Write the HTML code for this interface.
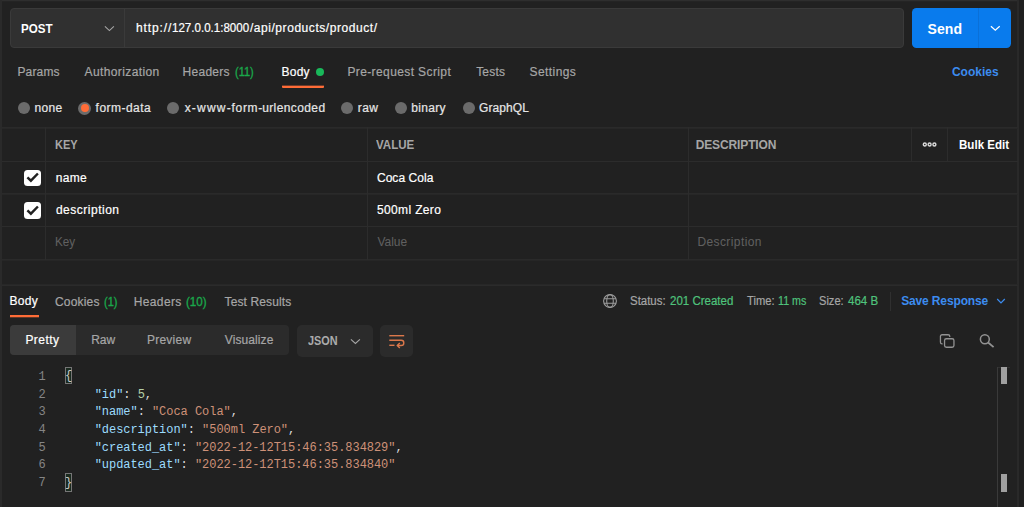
<!DOCTYPE html>
<html><head><meta charset="utf-8"><title>Postman</title>
<style>
html,body{margin:0;padding:0}
body{width:1024px;height:507px;background:#212121;position:relative;overflow:hidden;font-family:"Liberation Sans",sans-serif}
.a{position:absolute}
.t{position:absolute;transform-origin:0 0;-webkit-text-stroke:0.2px;line-height:16px;white-space:pre;font-family:"Liberation Sans",sans-serif}
.g{display:inline-block;transform-origin:0 0;white-space:pre}
.hl{position:absolute;height:1px;background:#2c2c2c;left:2px;width:1016px}
.vl{position:absolute;width:1px;background:#2c2c2c}
.radio{position:absolute;width:12.4px;height:12.4px;border-radius:50%;background:#6b6b6b;top:101.5px}
.cb{position:absolute;width:17px;height:16.5px;border-radius:3.5px;background:#fff;left:24.2px}
.code{position:absolute;left:66px;font:12px/17.67px "Liberation Mono",monospace;white-space:pre;color:#dcdcdc;letter-spacing:-0.04px}
.ln{position:absolute;left:20.6px;width:25px;text-align:right;font:12px/17.67px "Liberation Mono",monospace;color:#858585}
.b{position:relative;left:-1px;top:-1px;color:#c8c8c8}.k{color:#9cdcfe}.s{color:#ce9178}.n{color:#b5cea8}
</style></head><body>
<!-- edge strips -->
<div class="a" style="left:0;top:0;width:1019px;height:1px;background:#2e2e2e"></div>
<div class="a" style="left:0;top:1px;width:1019px;height:1px;background:#242424"></div>
<div class="a" style="left:0;top:0;width:2px;height:507px;background:#2a2a2a"></div>
<div class="a" style="left:1017px;top:0;width:2px;height:507px;background:#292929"></div>
<div class="a" style="left:1019px;top:0;width:5px;height:507px;background:#1f1f1f"></div>

<!-- url bar -->
<div class="a" style="left:10px;top:8px;width:894px;height:40px;box-sizing:border-box;background:#303030;border:1px solid #3a3a3a;border-radius:4px"></div>
<div class="vl" style="left:124px;top:9px;height:38px;background:#3a3a3a"></div>
<svg class="a" style="left:104px;top:24px" width="11" height="9" viewBox="0 0 11 9"><path d="M0.9 2.4 L5.4 6.6 L9.9 2.4" fill="none" stroke="#a6a6a6" stroke-width="1.1"/></svg>

<!-- send -->
<div class="a" style="left:912px;top:8px;width:99px;height:40px;background:#097bed;border-radius:4.5px"></div>
<div class="vl" style="left:978px;top:8px;height:40px;background:#0a70d8"></div>
<svg class="a" style="left:990px;top:24.3px" width="11" height="9" viewBox="0 0 11 9"><path d="M0.9 2.2 L5.3 6.3 L9.7 2.2" fill="none" stroke="#fff" stroke-width="1.2"/></svg>

<!-- request tabs -->
<div class="a" style="left:315.6px;top:68px;width:8.2px;height:8.2px;border-radius:50%;background:#19b85a"></div>
<div class="a" style="left:282px;top:85px;width:42px;height:1px;background:#6f3b29"></div>
<div class="a" style="left:282px;top:86px;width:42px;height:2px;background:#ff6c37;border-radius:0 0 1px 1px"></div>

<!-- radios -->
<div class="radio" style="left:18px"></div>
<div class="radio" style="left:78.4px;top:101.5px;width:13px;height:13px"></div>
<div class="a" style="left:80.6px;top:103.7px;width:8.6px;height:8.6px;border-radius:50%;background:#ff6c37"></div>
<div class="radio" style="left:167px"></div>
<div class="radio" style="left:341.1px"></div>
<div class="radio" style="left:394.9px"></div>
<div class="radio" style="left:462.8px"></div>

<!-- table -->
<div class="hl" style="top:127px;background:#2a2a2a"></div><div class="hl" style="top:128px;background:#272727"></div>
<div class="hl" style="top:161px"></div>
<div class="hl" style="top:193px;background:#2a2a2a"></div><div class="hl" style="top:194px;background:#272727"></div>
<div class="hl" style="top:226px"></div>
<div class="hl" style="top:259px;background:#2a2a2a"></div><div class="hl" style="top:260px;background:#262626"></div>
<div class="vl" style="left:45px;top:127px;height:133px"></div>
<div class="vl" style="left:367px;top:127px;height:133px"></div>
<div class="vl" style="left:688px;top:127px;height:133px"></div>
<div class="vl" style="left:911px;top:127px;height:35px"></div>
<div class="vl" style="left:947px;top:127px;height:35px"></div>
<!-- ooo -->
<svg class="a" style="left:922px;top:141px" width="16" height="7" viewBox="0 0 16 7"><g fill="none" stroke="#dadada" stroke-width="1.4"><circle cx="2.8" cy="3.5" r="1.5"/><circle cx="7.6" cy="3.5" r="1.5"/><circle cx="12.4" cy="3.5" r="1.5"/></g></svg>
<!-- checkboxes -->
<div class="cb" style="top:169.6px"></div>
<svg class="a" style="left:24.2px;top:169.2px" width="17" height="17" viewBox="0 0 17 17"><path d="M3.4 8.3 L6.9 11.7 L13.9 4.5" fill="none" stroke="#212121" stroke-width="2.4"/></svg>
<div class="cb" style="top:202.2px"></div>
<svg class="a" style="left:24.2px;top:201.8px" width="17" height="17" viewBox="0 0 17 17"><path d="M3.4 8.3 L6.9 11.7 L13.9 4.5" fill="none" stroke="#212121" stroke-width="2.4"/></svg>

<!-- response divider -->
<div class="hl" style="top:284px;background:#272727"></div><div class="hl" style="top:285px;background:#2b2b2b"></div>
<div class="a" style="left:10px;top:317px;width:29px;height:1px;background:#633625"></div>
<div class="a" style="left:10px;top:315px;width:29px;height:2px;background:#ff6c37"></div>
<!-- globe -->
<svg class="a" style="left:601.8px;top:293.2px" width="16" height="16" viewBox="0 0 16 16"><g fill="none" stroke="#9c9c9c" stroke-width="1.1"><circle cx="8" cy="8" r="6.4"/><ellipse cx="8" cy="8" rx="3.3" ry="6.4"/><path d="M2.1 5.8 H13.9 M2.1 10.2 H13.9"/></g></svg>
<div class="vl" style="left:890px;top:292px;height:19px;background:#303030"></div>
<svg class="a" style="left:996px;top:297px" width="10" height="8" viewBox="0 0 10 8"><path d="M1.2 2 L5 5.8 L8.8 2" fill="none" stroke="#3c8cf0" stroke-width="1.2"/></svg>

<!-- segmented -->
<div class="a" style="left:10px;top:325px;width:279px;height:30px;background:#2b2b2b;border-radius:4px"></div>
<div class="a" style="left:10px;top:325px;width:66px;height:30px;background:#3b3b3b;border-radius:4px 0 0 4px"></div>
<div class="a" style="left:297px;top:325px;width:76px;height:32px;background:#2b2b2b;border-radius:5px"></div>
<svg class="a" style="left:350px;top:337px" width="11" height="9" viewBox="0 0 11 9"><path d="M0.9 2.3 L5.4 6.5 L9.9 2.3" fill="none" stroke="#a6a6a6" stroke-width="1.1"/></svg>
<div class="a" style="left:380px;top:325px;width:33px;height:32px;background:#2b2b2b;border-radius:5px"></div>
<svg class="a" style="left:388.3px;top:333.3px" width="18" height="16" viewBox="0 0 18 16"><g fill="none" stroke="#dc784b" stroke-width="1.4"><path d="M1.3 2.7 H16.2"/><path d="M1.3 7.3 H13.2 a2.6 2.6 0 0 1 0 5.2 H9.5"/><path d="M1.3 12.3 H6.5"/><path d="M11.8 10 L9.3 12.5 L11.8 15"/></g></svg>
<!-- copy / search -->
<svg class="a" style="left:939px;top:333px" width="17" height="17" viewBox="0 0 17 17"><g fill="none" stroke="#929292" stroke-width="1.3"><rect x="5.55" y="5.75" width="9.4" height="8.5" rx="1.8"/><path d="M10.75 3.9 V3.35 a1.6 1.6 0 0 0 -1.6 -1.6 H3.05 a1.6 1.6 0 0 0 -1.6 1.6 V9.2 a1.6 1.6 0 0 0 1.6 1.6 H3.6"/></g></svg>
<svg class="a" style="left:979px;top:334px" width="17" height="16" viewBox="0 0 17 16"><g fill="none" stroke="#929292" stroke-width="1.5"><circle cx="5.85" cy="5.3" r="4.45"/><path d="M9.1 8.5 L14.6 13.1" stroke-width="1.8"/></g></svg>

<!-- code -->
<div class="a" style="left:65px;top:367px;width:7px;height:17px;box-sizing:border-box;border:1px solid #767676;background:#1a2a1f"></div>
<div class="a" style="left:65px;top:473px;width:7px;height:19px;box-sizing:border-box;border:1px solid #767676;background:#1a2a1f"></div>
<div class="ln" style="top:368.9px;white-space:pre">1
2
3
4
5
6
7</div>
<div class="code" style="top:368.9px"><span class="b">{</span>
    <span class="k">"id"</span>: <span class="n">5</span>,
    <span class="k">"name"</span>: <span class="s">"Coca Cola"</span>,
    <span class="k">"description"</span>: <span class="s">"500ml Zero"</span>,
    <span class="k">"created_at"</span>: <span class="s">"2022-12-12T15:46:35.834829"</span>,
    <span class="k">"updated_at"</span>: <span class="s">"2022-12-12T15:46:35.834840"</span>
<span class="b" style="top:0">}</span></div>
<!-- scrollbar -->
<div class="a" style="left:997px;top:367px;width:13px;height:1px;background:#303030"></div>
<div class="vl" style="left:997px;top:367px;height:140px;background:#3a3a3a"></div>
<div class="a" style="left:1001px;top:367px;width:6px;height:17px;background:#a0a0a0"></div>
<div class="a" style="left:1001px;top:474px;width:6px;height:18px;background:#a0a0a0"></div>

<span class="t" style="left:20.77px;top:20.94px;font-size:12px;font-weight:700;transform:scaleX(0.967);color:#ffffff;-webkit-text-stroke:0">POST</span>
<span class="t" style="left:135.95px;top:20.44px;font-size:12px;font-weight:400;color:#ffffff"><span class="g" style="width:36.23px;letter-spacing:0.89px">http://</span><span class="g" style="width:77.72px;transform:scaleX(0.963)">127.0.0.1:8000</span><span class="g" style="letter-spacing:0.56px">/api/products/product/</span></span>
<span class="t" style="left:927.50px;top:21.05px;font-size:14px;font-weight:700;letter-spacing:0.08px;color:#ffffff;-webkit-text-stroke:0">Send</span>
<span class="t" style="left:17.40px;top:64.14px;font-size:12px;font-weight:400;letter-spacing:0.16px;color:#a6a6a6">Params</span>
<span class="t" style="left:84.60px;top:64.14px;font-size:12px;font-weight:400;letter-spacing:0.38px;color:#a6a6a6">Authorization</span>
<span class="t" style="left:182.60px;top:64.14px;font-size:12px;font-weight:400;letter-spacing:0.27px;color:#a6a6a6">Headers</span>
<span class="t" style="left:234.72px;top:64.14px;font-size:12px;font-weight:400;transform:scaleX(0.911);color:#1aa84b;-webkit-text-stroke:0.35px">(11)</span>
<span class="t" style="left:281.60px;top:64.14px;font-size:12px;font-weight:400;letter-spacing:0.18px;color:#ffffff">Body</span>
<span class="t" style="left:347.40px;top:64.14px;font-size:12px;font-weight:400;letter-spacing:0.39px;color:#a6a6a6">Pre-request Script</span>
<span class="t" style="left:476.15px;top:64.14px;font-size:12px;font-weight:400;letter-spacing:0.20px;color:#a6a6a6">Tests</span>
<span class="t" style="left:529.60px;top:64.14px;font-size:12px;font-weight:400;letter-spacing:0.41px;color:#a6a6a6">Settings</span>
<span class="t" style="left:951.90px;top:64.14px;font-size:12px;font-weight:700;letter-spacing:0.01px;color:#3c8cf0;-webkit-text-stroke:0">Cookies</span>
<span class="t" style="left:34.55px;top:99.84px;font-size:12px;font-weight:400;letter-spacing:0.30px;color:#e6e6e6">none</span>
<span class="t" style="left:95.60px;top:99.84px;font-size:12px;font-weight:400;letter-spacing:0.47px;color:#e6e6e6">form-data</span>
<span class="t" style="left:184.65px;top:99.84px;font-size:12px;font-weight:400;color:#e6e6e6"><span class="g" style="width:46.95px;letter-spacing:1.21px">x-www-</span><span class="g" style="width:30.55px;letter-spacing:0.65px">form-</span><span class="g" style="letter-spacing:0.40px">urlencoded</span></span>
<span class="t" style="left:357.65px;top:99.84px;font-size:12px;font-weight:400;letter-spacing:0.53px;color:#e6e6e6">raw</span>
<span class="t" style="left:411.15px;top:99.84px;font-size:12px;font-weight:400;letter-spacing:0.36px;color:#e6e6e6">binary</span>
<span class="t" style="left:479.10px;top:99.84px;font-size:12px;font-weight:400;letter-spacing:0.07px;color:#e6e6e6">GraphQL</span>
<span class="t" style="left:54.51px;top:137.34px;font-size:12px;font-weight:700;transform:scaleX(0.918);color:#a6a6a6;-webkit-text-stroke:0">KEY</span>
<span class="t" style="left:376.40px;top:137.34px;font-size:12px;font-weight:700;transform:scaleX(0.961);color:#a6a6a6;-webkit-text-stroke:0">VALUE</span>
<span class="t" style="left:695.65px;top:137.34px;font-size:12px;font-weight:700;letter-spacing:-0.12px;color:#a6a6a6;-webkit-text-stroke:0">DESCRIPTION</span>
<span class="t" style="left:958.58px;top:137.34px;font-size:12px;font-weight:700;transform:scaleX(0.964);color:#ffffff;-webkit-text-stroke:0">Bulk Edit</span>
<span class="t" style="left:55.65px;top:169.54px;font-size:12px;font-weight:400;letter-spacing:0.32px;color:#ffffff">name</span>
<span class="t" style="left:376.90px;top:169.54px;font-size:12px;font-weight:400;letter-spacing:0.07px;color:#ffffff">Coca Cola</span>
<span class="t" style="left:55.90px;top:202.04px;font-size:12px;font-weight:400;letter-spacing:0.51px;color:#ffffff">description</span>
<span class="t" style="left:376.90px;top:202.04px;font-size:12px;font-weight:400;letter-spacing:0.37px;color:#ffffff">500ml Zero</span>
<span class="t" style="left:55.42px;top:234.14px;font-size:12px;font-weight:400;transform:scaleX(0.977);color:#606060;-webkit-text-stroke:0.05px">Key</span>
<span class="t" style="left:377.40px;top:234.14px;font-size:12px;font-weight:400;letter-spacing:0.01px;color:#606060;-webkit-text-stroke:0.05px">Value</span>
<span class="t" style="left:697.40px;top:234.14px;font-size:12px;font-weight:400;letter-spacing:0.41px;color:#606060;-webkit-text-stroke:0.05px">Description</span>
<span class="t" style="left:9.40px;top:293.24px;font-size:12px;font-weight:400;letter-spacing:0.35px;color:#ffffff">Body</span>
<span class="t" style="left:54.90px;top:293.64px;font-size:12px;font-weight:400;letter-spacing:0.20px;color:#a6a6a6">Cookies</span>
<span class="t" style="left:104.42px;top:293.64px;font-size:12px;font-weight:400;transform:scaleX(0.913);color:#1aa84b;-webkit-text-stroke:0.35px">(1)</span>
<span class="t" style="left:133.80px;top:293.64px;font-size:12px;font-weight:400;letter-spacing:0.35px;color:#a6a6a6">Headers</span>
<span class="t" style="left:186.18px;top:293.64px;font-size:12px;font-weight:400;transform:scaleX(0.965);color:#1aa84b;-webkit-text-stroke:0.35px">(10)</span>
<span class="t" style="left:224.55px;top:293.64px;font-size:12px;font-weight:400;letter-spacing:0.12px;color:#a6a6a6">Test Results</span>
<span class="t" style="left:630.22px;top:292.64px;font-size:12px;font-weight:400;transform:scaleX(0.954);color:#a6a6a6">Status:</span>
<span class="t" style="left:670.12px;top:292.64px;font-size:12px;font-weight:400;transform:scaleX(0.959);color:#4fc37c">201 Created</span>
<span class="t" style="left:746.87px;top:292.64px;font-size:12px;font-weight:400;transform:scaleX(0.931);color:#a6a6a6">Time:</span>
<span class="t" style="left:777.93px;top:292.64px;font-size:12px;font-weight:400;transform:scaleX(0.891);color:#4fc37c">11 ms</span>
<span class="t" style="left:818.94px;top:292.64px;font-size:12px;font-weight:400;transform:scaleX(0.923);color:#a6a6a6">Size:</span>
<span class="t" style="left:848.16px;top:292.64px;font-size:12px;font-weight:400;transform:scaleX(0.961);color:#4fc37c">464 B</span>
<span class="t" style="left:901.20px;top:293.14px;font-size:12px;font-weight:700;letter-spacing:-0.14px;color:#3c8cf0;-webkit-text-stroke:0">Save Response</span>
<span class="t" style="left:25.40px;top:332.04px;font-size:12px;font-weight:400;letter-spacing:0.47px;color:#ffffff">Pretty</span>
<span class="t" style="left:91.30px;top:332.04px;font-size:12px;font-weight:400;letter-spacing:-0.10px;color:#a6a6a6">Raw</span>
<span class="t" style="left:146.90px;top:332.04px;font-size:12px;font-weight:400;letter-spacing:0.26px;color:#a6a6a6">Preview</span>
<span class="t" style="left:224.80px;top:332.04px;font-size:12px;font-weight:400;letter-spacing:0.09px;color:#a6a6a6">Visualize</span>
<span class="t" style="left:307.67px;top:333.14px;font-size:12px;font-weight:700;transform:scaleX(0.907);color:#ababab;-webkit-text-stroke:0">JSON</span>
</body></html>
